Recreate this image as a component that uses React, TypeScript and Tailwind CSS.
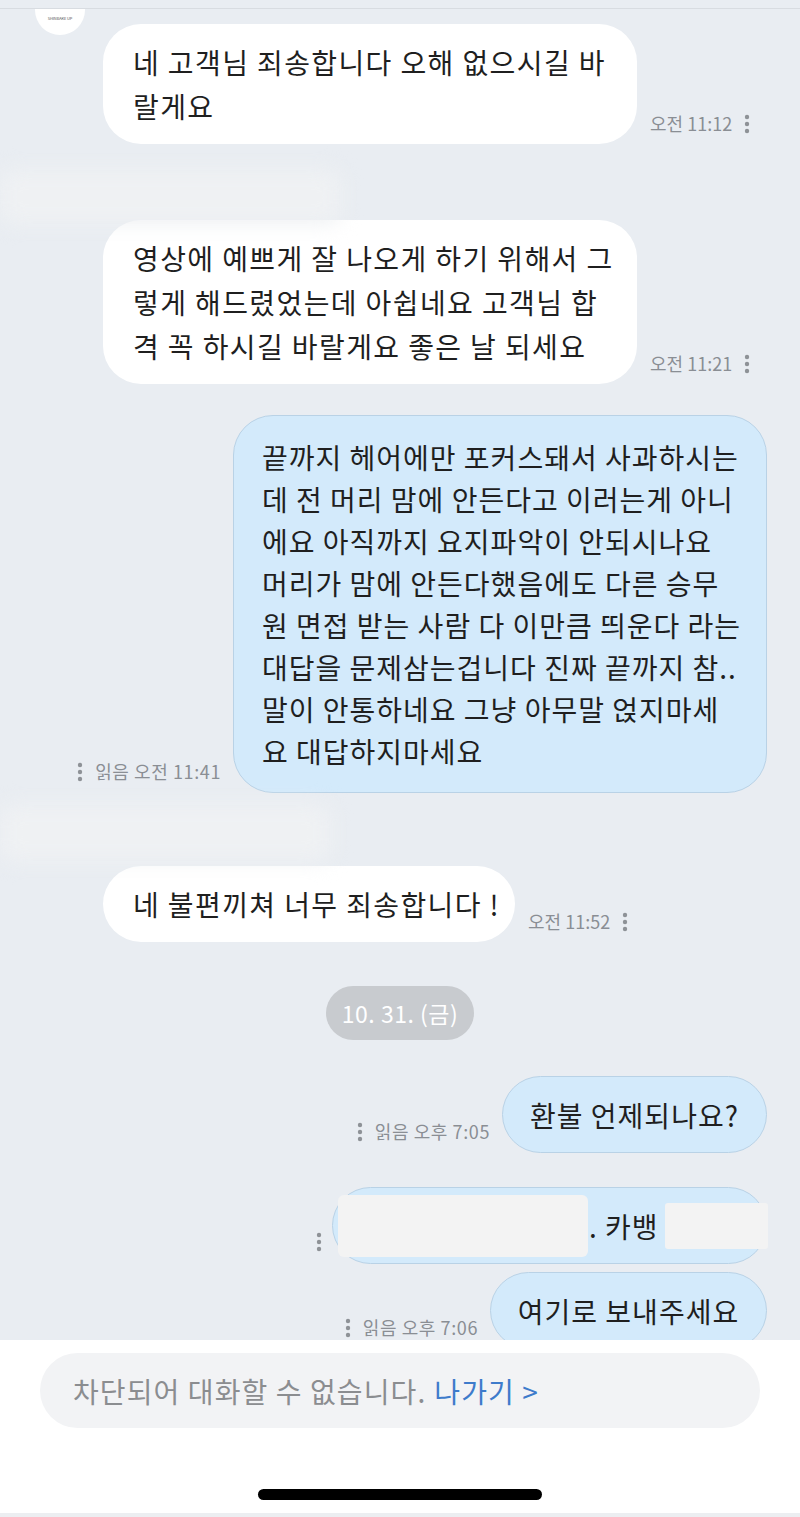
const Dots = () => (
  <svg width="6" height="20" viewBox="0 0 6 20" className="shrink-0">
    <circle cx="3" cy="3" r="2.2" fill="#8e9297" />
    <circle cx="3" cy="10" r="2.2" fill="#8e9297" />
    <circle cx="3" cy="17" r="2.2" fill="#8e9297" />
  </svg>
);

function Received({ lines, time, w }: { lines: string[]; time: string; w: string }) {
  return (
    <div className="flex items-end pl-[103px]">
      <div className={`${w} bg-white rounded-[38px] px-[30px] py-[16px] text-[28px] leading-[44px] tracking-[1.4px] text-[#1f1f1f]`}>
        {lines.map((l) => (
          <div key={l} className="whitespace-nowrap">{l}</div>
        ))}
      </div>
      <div className="flex items-center gap-[12px] pl-[13px] pb-[7px] text-[18px] text-[#8a8e94]">
        <span className="whitespace-nowrap">{time}</span>
        <Dots />
      </div>
    </div>
  );
}

function SentMeta({ time }: { time?: string }) {
  return (
    <div className="flex items-center gap-[12px] pr-[12px] pb-[8px] text-[18px] tracking-[0.6px] text-[#8a8e94]">
      <Dots />
      {time && <span className="whitespace-nowrap">읽음 {time}</span>}
    </div>
  );
}

export default function App() {
  const big = [
    "끝까지 헤어에만 포커스돼서 사과하시는",
    "데 전 머리 맘에 안든다고 이러는게 아니",
    "에요 아직까지 요지파악이 안되시나요",
    "머리가 맘에 안든다했음에도 다른 승무",
    "원 면접 받는 사람 다 이만큼 띄운다 라는",
    "대답을 문제삼는겁니다 진짜 끝까지 참..",
    "말이 안통하네요 그냥 아무말 얹지마세",
    "요 대답하지마세요",
  ];
  return (
    <div className="w-[800px] h-[1517px] bg-[#e9edf2] flex flex-col overflow-hidden font-['Noto_Sans_CJK_KR','Noto_Sans',sans-serif]">
      <div className="h-[9px] shrink-0 border-b border-[#d8dce1] bg-[#e9edf2]" />

      <div className="relative flex-1 overflow-hidden">
        <div className="absolute left-[35px] top-[-24px] w-[50px] h-[50px] rounded-full bg-white flex items-end justify-center pb-[14px]">
          <span className="text-[4px] text-[#555] tracking-tight">SHINBAKE UP</span>
        </div>

        <div className="pt-[15px]">
          <Received w="w-[534px]" lines={["네 고객님 죄송합니다 오해 없으시길 바", "랄게요"]} time="오전 11:12" />

          <div className="mt-[26px] -mb-[4px] h-[54px] w-[340px] bg-[#eff1f3] blur-[10px] rounded-[12px]" />

          <Received
            w="w-[534px]"
            lines={["영상에 예쁘게 잘 나오게 하기 위해서 그", "렇게 해드렸었는데 아쉽네요 고객님 합", "격 꼭 하시길 바랄게요 좋은 날 되세요"]}
            time="오전 11:21"
          />

          <div className="mt-[31px] flex justify-end items-end pr-[33px]">
            <SentMeta time="오전 11:41" />
            <div className="w-[534px] bg-[#d3eafb] border border-[#b9d2e6] rounded-[40px] pl-[28px] pr-[14px] py-[20px] text-[28px] leading-[42px] tracking-[1px] text-[#1f1f1f]">
              {big.map((l) => (
                <div key={l} className="whitespace-nowrap">{l}</div>
              ))}
            </div>
          </div>

          <div className="mt-[12px] mb-[5px] h-[56px] w-[330px] bg-[#eff1f3] blur-[10px] rounded-[12px]" />

          <Received w="w-[412px]" lines={["네 불편끼쳐 너무 죄송합니다 !"]} time="오전 11:52" />

          <div className="mt-[44px] flex justify-center">
            <div className="w-[148px] h-[54px] rounded-full bg-[#c8cbcf] text-white text-[23px] tracking-[0.5px] flex items-center justify-center">
              10. 31. (금)
            </div>
          </div>

          <div className="mt-[36px] flex justify-end items-end pr-[33px]">
            <SentMeta time="오후 7:05" />
            <div className="w-[265px] h-[77px] bg-[#d3eafb] border border-[#b9d2e6] rounded-full flex items-center justify-center text-[28px] tracking-[1px] text-[#1f1f1f]">
              환불 언제되나요?
            </div>
          </div>

          <div className="mt-[34px] flex justify-end items-end pr-[33px]">
            <div className="pr-[10px] pb-[12px]">
              <Dots />
            </div>
            <div className="w-[435px] h-[77px] bg-[#d3eafb] border border-[#b9d2e6] rounded-full flex items-center text-[28px] text-[#1f1f1f]">
              <div className="ml-[5px] w-[250px] h-[62px] bg-[#f3f3f3] rounded-[6px]" />
              <span className="ml-[1px] whitespace-nowrap tracking-[1px]">. 카뱅</span>
              <div className="ml-[6px] flex-1 h-[46px] bg-[#f3f3f3] rounded-[3px] -mr-[2px]" />
            </div>
          </div>

          <div className="mt-[8px] flex justify-end items-end pr-[33px]">
            <SentMeta time="오후 7:06" />
            <div className="w-[277px] h-[77px] bg-[#d3eafb] border border-[#b9d2e6] rounded-full flex items-center justify-center text-[28px] tracking-[1px] text-[#1f1f1f]">
              여기로 보내주세요
            </div>
          </div>
        </div>
      </div>

      <div className="h-[177px] shrink-0 bg-white flex flex-col items-center">
        <div className="mt-[13px] w-[720px] h-[75px] rounded-full bg-[#f2f3f5] flex items-center pl-[33px] text-[28px] tracking-[1.1px]">
          <span className="text-[#8b8d90]">차단되어 대화할 수 없습니다.</span>
          <span className="ml-[8px] text-[#3e7bcb]">나가기 &gt;</span>
        </div>
        <div className="mt-[61px] w-[284px] h-[11px] rounded-full bg-black" />
        <div className="mt-auto h-[4px] w-full bg-[#eceef1]" />
      </div>
    </div>
  );
}
